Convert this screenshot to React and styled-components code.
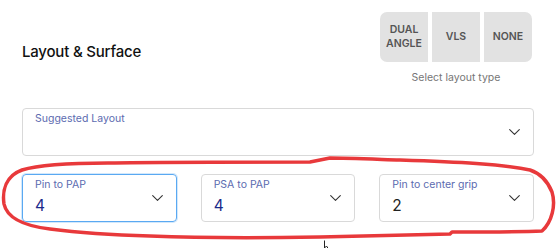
import React from 'react'
import styled, { createGlobalStyle } from 'styled-components'

const GlobalStyle = createGlobalStyle`
  html, body {
    margin: 0;
    padding: 0;
    background: #ffffff;
  }
  body {
    font-family: Inter, "Open Sans", "Liberation Sans", sans-serif;
  }
`

const Page = styled.div`
  position: relative;
  width: 557px;
  height: 248px;
  padding: 12px 23px 0 22px;
  box-sizing: border-box;
  overflow: hidden;
`

const Header = styled.div`
  display: flex;
  justify-content: space-between;
  align-items: flex-start;
`

const Title = styled.h2`
  margin: 30px 0 0 0;
  font-size: 15px;
  font-weight: 500;
  color: #111;
  letter-spacing: -0.2px;
`

const TypePicker = styled.div`
  display: flex;
  flex-direction: column;
  align-items: center;
  margin-right: 2px;
`

const ButtonGroup = styled.div`
  display: flex;
  gap: 4px;
  border-radius: 7px;
  overflow: hidden;
`

const TypeButton = styled.button`
  width: 48px;
  height: 50px;
  padding: 0;
  border: none;
  background: #e2e2e2;
  color: #555;
  font-family: inherit;
  font-size: 10.5px;
  font-weight: 600;
  line-height: 14.5px;
  text-align: center;
  cursor: pointer;
`

const Caption = styled.div`
  margin-top: 9px;
  font-size: 10.5px;
  color: #767676;
`

const Field = styled.div`
  display: flex;
  align-items: center;
  height: 48px;
  box-sizing: border-box;
  border: 1px solid ${p => p.$focused ? '#5aa9f2' : '#d9d9d9'};
  box-shadow: ${p => p.$focused ? '0 0 0 1px #d3e8fb' : 'none'};
  border-radius: 4px;
  padding: 0 13px 0 12px;
`

const FieldBody = styled.div`
  flex: 1;
  align-self: stretch;
  display: flex;
  flex-direction: column;
  padding-top: 3px;
`

const Label = styled.div`
  font-size: 10.5px;
  color: #5c6bb0;
  line-height: 13px;
`

const Value = styled.div`
  margin-top: 5px;
  font-size: 15.5px;
  color: ${p => p.$dark ? '#222' : '#1a2a8a'};
  line-height: 20px;
`

const SuggestedWrap = styled.div`
  margin-top: 24px;
`

const Row = styled.div`
  display: grid;
  grid-template-columns: repeat(3, 1fr);
  column-gap: 24px;
  margin-top: 18px;
`

const Chevron = () => (
  <svg width="11" height="6" viewBox="0 0 11 6" fill="none">
    <path d="M0.7 0.7l4.8 4.6 4.8-4.6" stroke="#333" strokeWidth="1.1" strokeLinecap="round" strokeLinejoin="round" />
  </svg>
)

const Annotation = styled.svg`
  position: absolute;
  left: 0;
  top: 0;
  pointer-events: none;
`

const SelectField = ({ label, value, focused, dark }) => (
  <Field $focused={focused}>
    <FieldBody>
      <Label>{label}</Label>
      {value && <Value $dark={dark}>{value}</Value>}
    </FieldBody>
    <Chevron />
  </Field>
)

export default function App() {
  return (
    <>
      <GlobalStyle />
      <Page>
        <Header>
          <Title>Layout &amp; Surface</Title>
          <TypePicker>
            <ButtonGroup>
              <TypeButton>DUAL<br />ANGLE</TypeButton>
              <TypeButton>VLS</TypeButton>
              <TypeButton>NONE</TypeButton>
            </ButtonGroup>
            <Caption>Select layout type</Caption>
          </TypePicker>
        </Header>

        <SuggestedWrap>
          <SelectField label="Suggested Layout" />
        </SuggestedWrap>

        <Row>
          <SelectField label="Pin to PAP" value="4" focused />
          <SelectField label="PSA to PAP" value="4" />
          <SelectField label="Pin to center grip" value="2" dark />
        </Row>

        {/* red hand-drawn highlight + cursor from the screenshot */}
        <Annotation width="557" height="248" viewBox="0 0 557 248">
          <path
            d="M108 163 C70 163 38 165 22 170 C6 176 2 190 4 204 C7 218 25 226 50 229 C80 233 110 235 150 236 C200 238 260 238 320 237 C380 236 420 235 450 234 L452 232 C480 232 520 232 542 231 C552 222 556 205 552 192 C548 182 542 174 530 170 C500 164 460 162 400 160 C370 159 345 158 330 158 L310 162 C250 162 160 162 108 163 Z"
            fill="none"
            stroke="#e8393b"
            strokeWidth="3.5"
            strokeLinejoin="round"
          />
          <path d="M324.5 240.5 L324.5 248 L326.5 246 L328.5 249" fill="#fff" stroke="#222" strokeWidth="1" />
        </Annotation>
      </Page>
    </>
  )
}
